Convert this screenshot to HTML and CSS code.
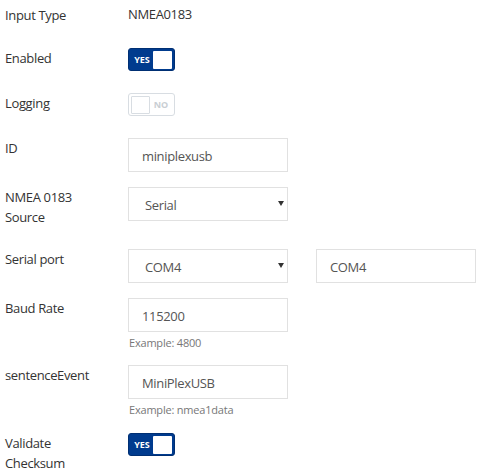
FILE: index.html
```html
<!DOCTYPE html>
<html>
<head>
<meta charset="utf-8">
<link rel="stylesheet" href="styles.css">
</head>
<body>
<div class="form">
  <div class="row row-text">
    <div class="label">Input Type</div>
    <div class="value">NMEA0183</div>
  </div>
  <div class="row row-toggle">
    <div class="label">Enabled</div>
    <div class="toggle on"><span class="tlabel">YES</span><span class="knob"></span></div>
  </div>
  <div class="row row-toggle">
    <div class="label">Logging</div>
    <div class="toggle off"><span class="knob"></span><span class="tlabel">NO</span></div>
  </div>
  <div class="row">
    <div class="label">ID</div>
    <div class="control"><div class="input">miniplexusb</div></div>
  </div>
  <div class="row row-tall">
    <div class="label">NMEA 0183<br>Source</div>
    <div class="control"><div class="input select">Serial<svg class="caret" width="6" height="5" viewBox="0 0 6 5"><path d="M0 0H6L3 5Z" fill="#333"/></svg></div></div>
  </div>
  <div class="row">
    <div class="label">Serial port</div>
    <div class="control"><div class="input select">COM4<svg class="caret" width="6" height="5" viewBox="0 0 6 5"><path d="M0 0H6L3 5Z" fill="#333"/></svg></div></div>
    <div class="control second"><div class="input">COM4</div></div>
  </div>
  <div class="row row-help">
    <div class="label">Baud Rate</div>
    <div class="control"><div class="input">115200</div><div class="help">Example: 4800</div></div>
  </div>
  <div class="row row-help row-help-last">
    <div class="label">sentenceEvent</div>
    <div class="control"><div class="input">MiniPlexUSB</div><div class="help">Example: nmea1data</div></div>
  </div>
  <div class="row row-toggle">
    <div class="label">Validate<br>Checksum</div>
    <div class="toggle on"><span class="tlabel">YES</span><span class="knob"></span></div>
  </div>
</div>
</body>
</html>
```
FILE: styles.css
```css
html, body {
  margin: 0;
  padding: 0;
  background: #fff;
}
body {
  font-family: "Open Sans", "Noto Sans", sans-serif;
  font-size: 13px;
  letter-spacing: -0.35px;
  color: #333;
}
.form {
  padding-left: 5px;
}
.row {
  display: flex;
  align-items: flex-start;
  margin-bottom: 15px;
}
.label {
  width: 123px;
  flex: none;
  line-height: 20px;
}
.row-text {
  height: 33px;
}
.row-text .label,
.row-text .value {
  padding-top: 5px;
}
.value {
  color: #333;
}
.row-toggle {
  min-height: 30px;
}
.row-tall {
  min-height: 47px;
}
.row-help {
  margin-bottom: 15px;
}
.row-help-last {
  margin-bottom: 16px;
}
.control {
  width: 160px;
  flex: none;
}
.control.second {
  margin-left: 28px;
}
.input {
  box-sizing: border-box;
  height: 34px;
  border: 1px solid #e1e1e1;
  padding: 2px 12px 0 13px;
  display: flex;
  align-items: center;
  color: #555;
  line-height: 20px;
}
.select {
  padding-left: 16px;
  padding-right: 3px;
  justify-content: space-between;
}
.caret {
  display: block;
  margin-top: -3px;
}
.help {
  font-size: 11px;
  letter-spacing: -0.2px;
  color: #777;
  line-height: 15px;
  margin-top: 3px;
  padding-left: 1px;
}
.toggle {
  box-sizing: border-box;
  width: 47px;
  height: 23px;
  border-radius: 3px;
  display: flex;
  align-items: center;
  padding: 2px;
  letter-spacing: 0;
}
.toggle.on {
  background: #003b8e;
  border: 1px solid #002f73;
}
.toggle.off {
  background: #fff;
  border: 1px solid #d8dde2;
}
.knob {
  width: 19px;
  height: 18px;
  box-sizing: border-box;
  background: #fff;
  border-radius: 1px;
  flex: none;
}
.toggle.off .knob {
  border: 1px solid #d8dde2;
}
.tlabel {
  flex: 1;
  text-align: center;
  font-size: 9px;
  font-weight: 700;
  line-height: 1;
}
.toggle.on .tlabel {
  color: #fff;
}
.toggle.off .tlabel {
  color: #c9ced3;
}
```
